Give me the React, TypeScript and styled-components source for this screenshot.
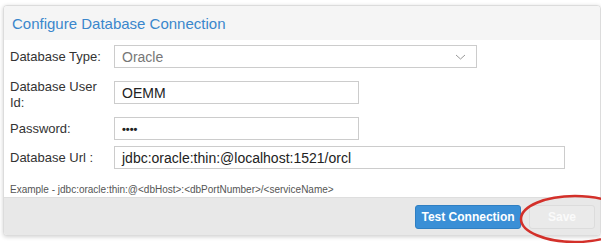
import React from "react"
import styled, { createGlobalStyle } from "styled-components"

const GlobalStyle = createGlobalStyle`
    body{
        margin:0;
        background:#ffffff;
        font-family:"Liberation Sans", Arial, sans-serif;
    }
`

const Page = styled.div`
    position:relative;
    width:601px;
    height:243px;
    padding:5px 0 0 3px;
    box-sizing:border-box;
    overflow:hidden;
`

const Panel = styled.section`
    width:596px;
    border:1px solid #dcdcdc;
    border-radius:4px;
    box-shadow:0 1px 4px rgba(0,0,0,.18);
    overflow:hidden;
    background:#fff;
`

const Header = styled.div`
    height:34px;
    background:#f5f5f5;
    display:flex;
    align-items:center;
    padding-left:8px;
    & h3{
        margin:0;
        font-weight:normal;
        font-size:15px;
        color:#3a87cc;
    }
`

const Body = styled.div`
    padding:5px 0 0 6px;
    display:flex;
    flex-direction:column;
    gap:6px;
    height:157px;
    box-sizing:border-box;
`

const Row = styled.div<{$tall?: boolean}>`
    display:flex;
    align-items:center;
    min-height:${p => p.$tall ? "37px" : "23px"};
    & label{
        align-self:${p => p.$tall ? "flex-end" : "center"};
    }
`

const Label = styled.label`
    width:104px;
    flex:none;
    font-size:13px;
    line-height:16px;
    color:#333;
`

const Field = styled.div<{$w: number}>`
    position:relative;
    width:${p => p.$w}px;
    height:23px;
    box-sizing:border-box;
    border:1px solid #cccccc;
    background:#fff;
    display:flex;
    align-items:center;
    padding-left:7px;
    font-size:14px;
    color:#222;
`

const Muted = styled.span`
    color:#777;
`

const Chevron = styled.svg`
    position:absolute;
    right:10px;
    top:7px;
`

const Dots = styled.span`
    font-size:11px;
    font-weight:bold;
    color:#222;
`

const Hint = styled.p`
    margin:9px 0 0 0;
    font-size:10px;
    color:#555;
`

const Footer = styled.div`
    height:37px;
    background:#e8e8e8;
    border-top:1px solid #dedede;
    display:flex;
    justify-content:flex-end;
    align-items:center;
    gap:8px;
    padding-right:5px;
`

const Button = styled.button<{$primary?: boolean}>`
    height:24px;
    border-radius:3px;
    font-family:"Liberation Sans", Arial, sans-serif;
    font-weight:bold;
    font-size:12px;
    white-space:nowrap;
    padding:0;
    color:${p => p.$primary ? "#fff" : "#fafafa"};
    background:${p => p.$primary ? "#3a8fd6" : "#eaeaea"};
    border:1px solid ${p => p.$primary ? "#2f7fc2" : "#dcdcdc"};
    width:${p => p.$primary ? "106px" : "66px"};
`

const Circle = styled.svg`
    position:absolute;
    left:518px;
    top:194px;
`

const App = () => {
    return (
        <Page>
            <GlobalStyle />
            <Panel>
                <Header><h3>Configure Database Connection</h3></Header>
                <Body>
                    <Row>
                        <Label>Database Type:</Label>
                        <Field $w={363}>
                            <Muted>Oracle</Muted>
                            <Chevron width="11" height="8" viewBox="0 0 11 8">
                                <path d="M1 2 L5.5 6 L10 2" fill="none" stroke="#999" strokeWidth="1"/>
                            </Chevron>
                        </Field>
                    </Row>
                    <Row $tall>
                        <Label>Database User Id:</Label>
                        <Field $w={245}>OEMM</Field>
                    </Row>
                    <Row>
                        <Label>Password:</Label>
                        <Field $w={245}><Dots>&bull;&bull;&bull;&bull;</Dots></Field>
                    </Row>
                    <Row>
                        <Label>Database Url :</Label>
                        <Field $w={451}>jdbc:oracle:thin:@localhost:1521/orcl</Field>
                    </Row>
                    <Hint>Example - jdbc:oracle:thin:@&lt;dbHost&gt;:&lt;dbPortNumber&gt;/&lt;serviceName&gt;</Hint>
                </Body>
                <Footer>
                    <Button $primary>Test Connection</Button>
                    <Button disabled>Save</Button>
                </Footer>
            </Panel>
            <Circle width="90" height="52" viewBox="0 0 90 52">
                <ellipse cx="57" cy="25" rx="54" ry="23" fill="none" stroke="#d3302a" strokeWidth="2.5"/>
            </Circle>
        </Page>
    )
}

export default App
